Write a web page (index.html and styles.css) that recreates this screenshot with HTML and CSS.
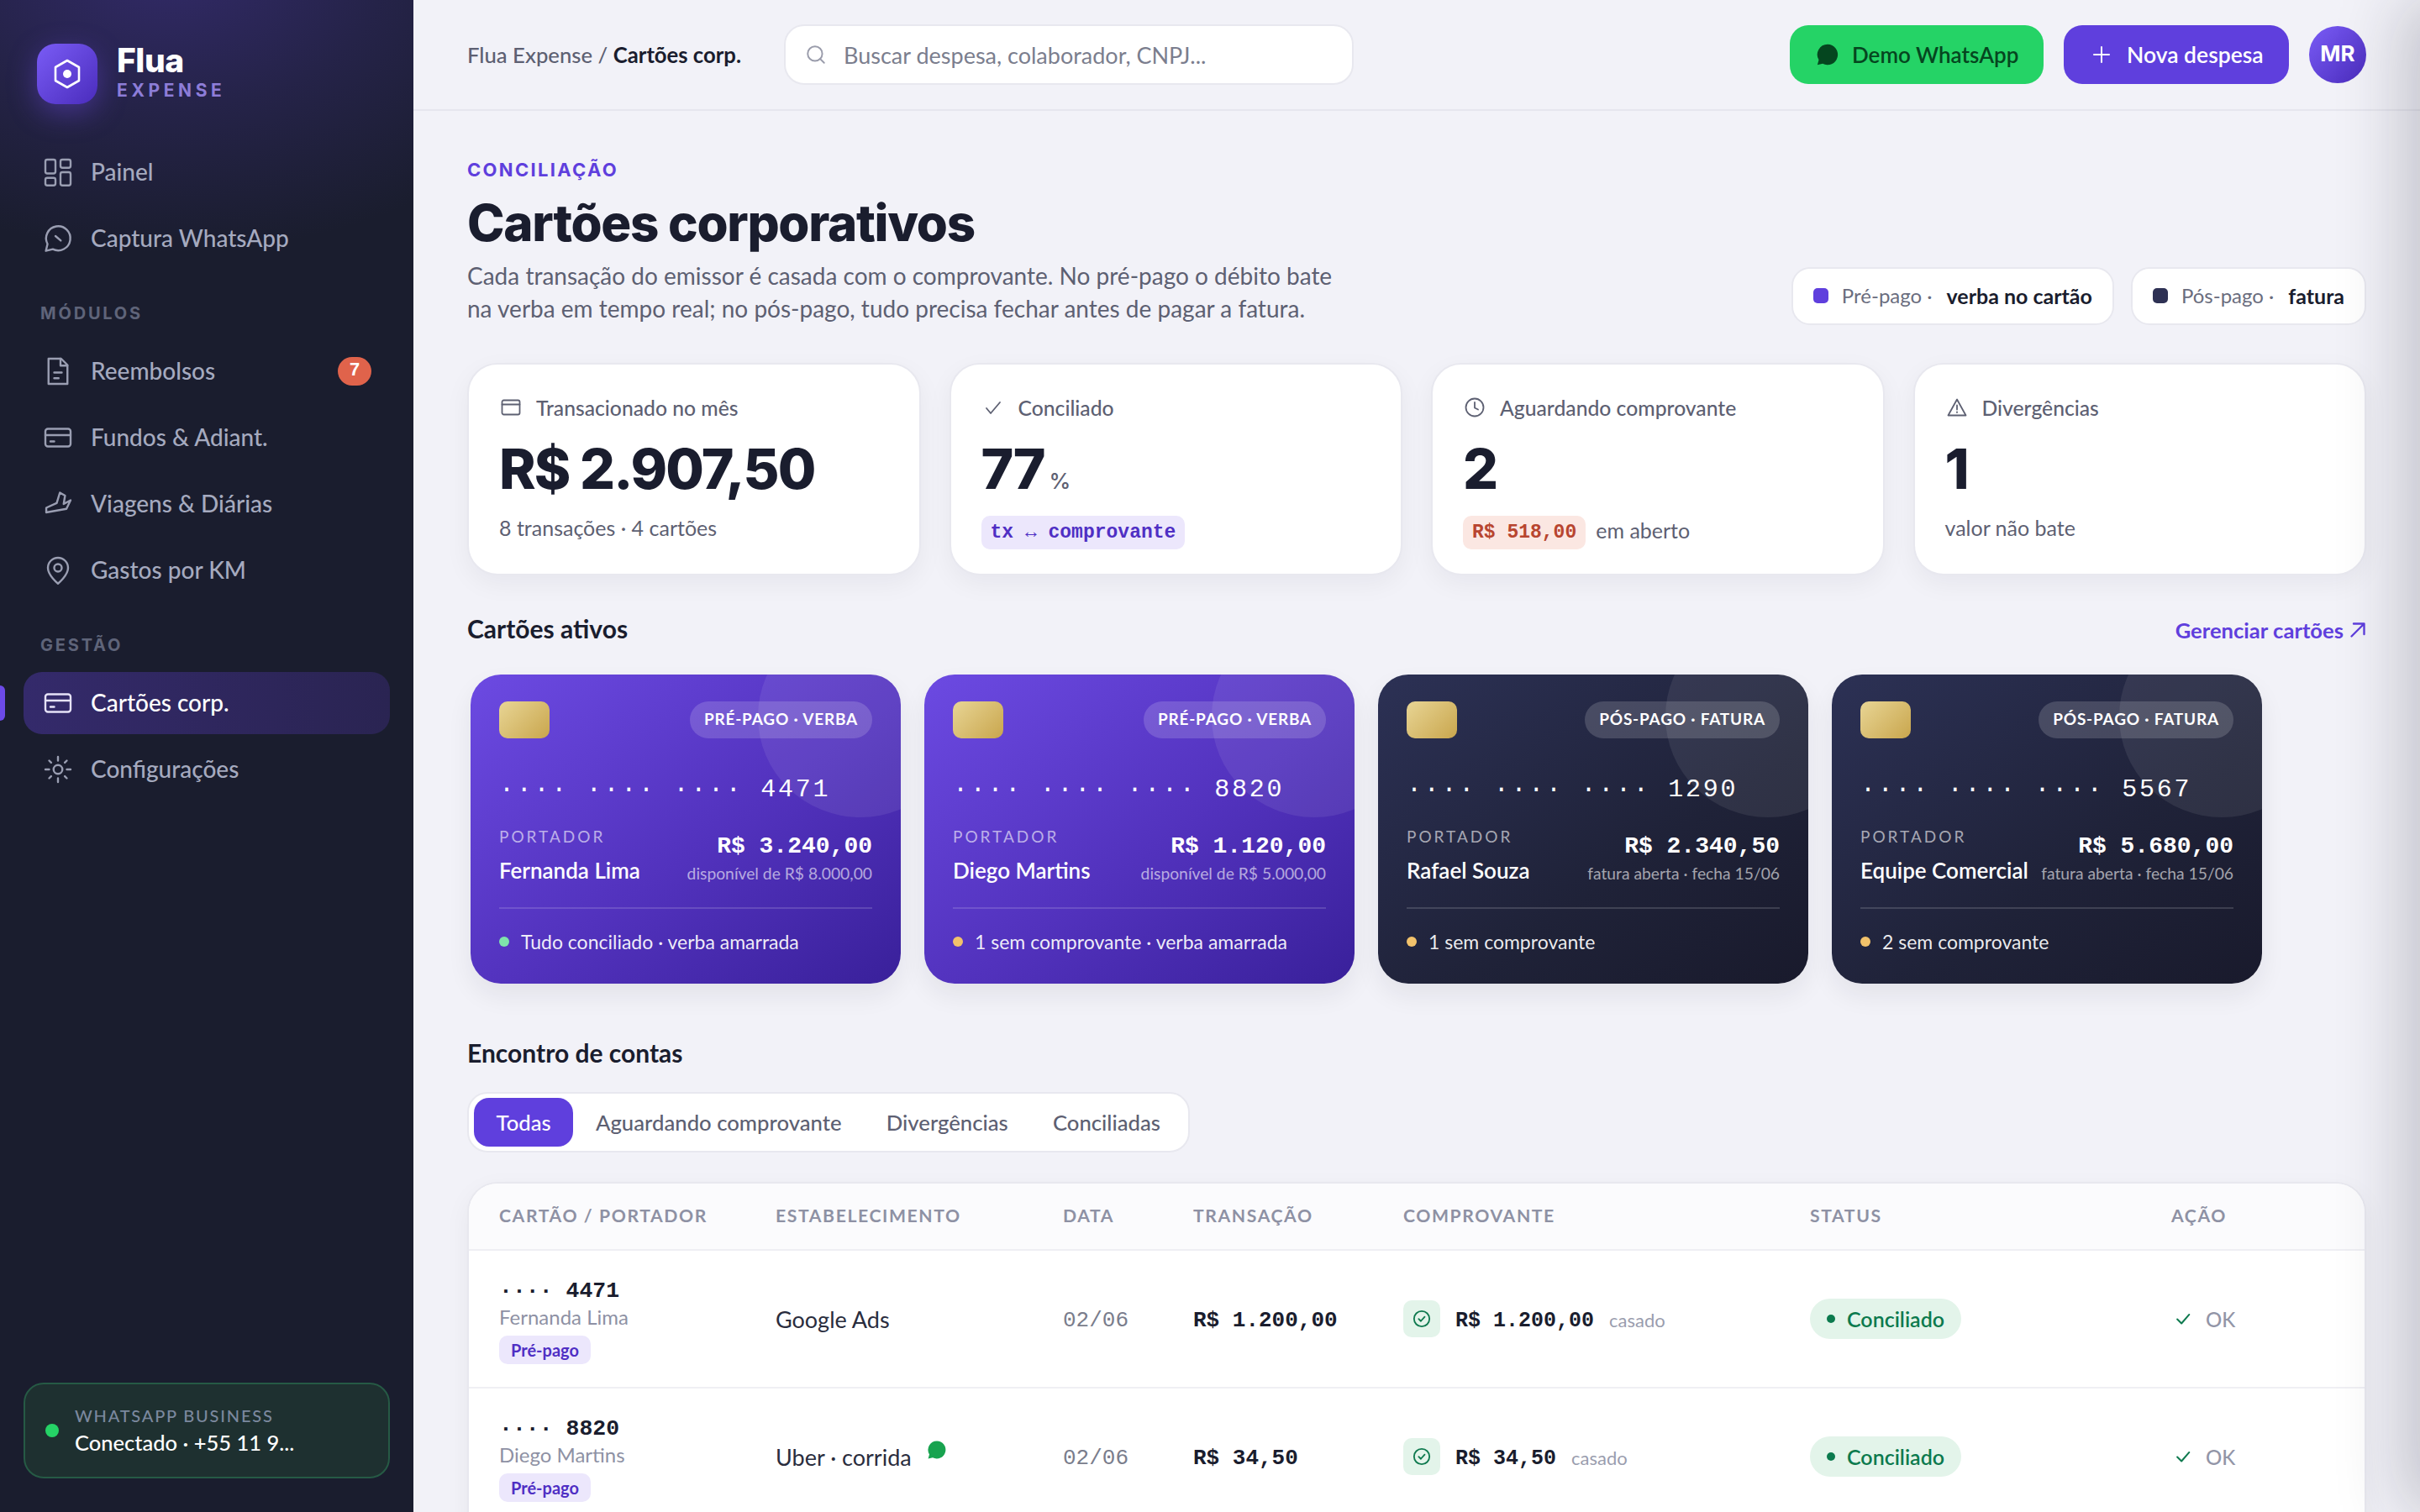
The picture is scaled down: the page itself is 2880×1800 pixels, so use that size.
FILE: index.html
```html
<!DOCTYPE html>
<html lang="pt-BR">
<head>
<meta charset="utf-8">
<title>Flua Expense</title>
<link rel="stylesheet" href="styles.css">
</head>
<body>
<svg class="defs" width="0" height="0" aria-hidden="true">
  <symbol id="i-card" viewBox="0 0 24 24"><rect x="2" y="5" width="20" height="14" rx="2"/><path d="M2 10h20M6 15h3"/></symbol>
  <symbol id="i-wa" viewBox="0 0 24 24"><path d="M12 1.5A10.5 10.5 0 0 0 3 17.4L1.6 22.6l5.4-1.3A10.5 10.5 0 1 0 12 1.5z"/></symbol>
  <symbol id="i-check" viewBox="0 0 24 24"><path d="M4.5 12.5 10 18 20 6.5"/></symbol>
  <symbol id="i-okc" viewBox="0 0 24 24"><circle cx="12" cy="12" r="10"/><path d="m8 12.2 2.8 2.8 5-5.6"/></symbol>
</svg>

<div class="app">
  <aside class="sidebar">
    <div class="brand">
      <div class="logo">
        <svg viewBox="0 0 32 36"><path d="M16 2 30 10v16l-14 8-14-8V10z"/><circle cx="16" cy="18" r="5"/></svg>
      </div>
      <div class="brand-text">
        <div class="brand-name">Flua</div>
        <div class="brand-sub">EXPENSE</div>
      </div>
    </div>
    <nav class="nav">
      <a class="nav-item"><svg class="nav-ico" viewBox="0 0 24 24"><rect x="2" y="2" width="8" height="11" rx="1.5"/><rect x="14" y="2" width="8" height="6.5" rx="1.5"/><rect x="14" y="12" width="8" height="10.5" rx="1.5"/><rect x="2" y="16.5" width="8" height="6" rx="1.5"/></svg><span>Painel</span></a>
      <a class="nav-item"><svg class="nav-ico" viewBox="0 0 24 24"><path d="M7.9 20.4A9.6 9.6 0 1 0 3.7 16.3L2.4 21.8z"/><path d="m10 10 4.2 3.6"/></svg><span>Captura WhatsApp</span></a>
      <div class="nav-label">MÓDULOS</div>
      <a class="nav-item"><svg class="nav-ico" viewBox="0 0 24 24"><path d="M14.5 2H4.5v20h15V7z"/><path d="M14 2v5.5h5.5M9 13h6M9 17.5h3.5"/></svg><span>Reembolsos</span><b class="badge">7</b></a>
      <a class="nav-item"><svg class="nav-ico"><use href="#i-card"/></svg><span>Fundos &amp; Adiant.</span></a>
      <a class="nav-item"><svg class="nav-ico" viewBox="0 0 24 24"><path d="M2.7 15 11 11.3 13.5 3l4.1 2.3-1.1 6.7L22 9l-3.3 6.8-16 2.9z"/></svg><span>Viagens &amp; Diárias</span></a>
      <a class="nav-item"><svg class="nav-ico" viewBox="0 0 24 24"><path d="M20 10c0 6-8 12.5-8 12.5S4 16 4 10a8 8 0 0 1 16 0z"/><circle cx="12" cy="10" r="3"/></svg><span>Gastos por KM</span></a>
      <div class="nav-label">GESTÃO</div>
      <a class="nav-item is-active"><i class="nav-mark"></i><svg class="nav-ico"><use href="#i-card"/></svg><span>Cartões corp.</span></a>
      <a class="nav-item"><svg class="nav-ico" viewBox="0 0 24 24"><circle cx="12" cy="12" r="3.5"/><path d="M12 2v3M12 19v3M2 12h3M19 12h3M5 5l1.6 1.6M17.4 17.4 19 19M5 19l1.6-1.6M17.4 6.6 19 5"/></svg><span>Configurações</span></a>
    </nav>
    <div class="wa-status">
      <i class="wa-dot"></i>
      <div class="wa-text">
        <div class="wa-title">WHATSAPP BUSINESS</div>
        <div class="wa-line">Conectado · +55 11 9...</div>
      </div>
    </div>
  </aside>

  <main class="main">
    <header class="topbar">
      <div class="crumb">Flua Expense / <b>Cartões corp.</b></div>
      <div class="search">
        <svg class="search-ico" viewBox="0 0 24 24"><circle cx="11" cy="11" r="8"/><path d="m21 21-4.3-4.3"/></svg>
        <span>Buscar despesa, colaborador, CNPJ...</span>
      </div>
      <div class="top-actions">
        <button class="btn btn-wa"><svg class="btn-ico-wa"><use href="#i-wa"/></svg>Demo WhatsApp</button>
        <button class="btn btn-new"><svg class="btn-ico-plus" viewBox="0 0 24 24"><path d="M12 3v18M3 12h18"/></svg>Nova despesa</button>
        <div class="avatar">MR</div>
      </div>
    </header>

    <div class="content">
      <section class="page-head">
        <div>
          <div class="eyebrow">CONCILIAÇÃO</div>
          <h1>Cartões corporativos</h1>
          <p class="desc">Cada transação do emissor é casada com o comprovante. No pré-pago o débito bate<br>na verba em tempo real; no pós-pago, tudo precisa fechar antes de pagar a fatura.</p>
        </div>
        <div class="legend">
          <div class="legend-chip"><i class="sq sq-pre"></i><span>Pré-pago ·</span><b>verba no cartão</b></div>
          <div class="legend-chip"><i class="sq sq-pos"></i><span>Pós-pago ·</span><b>fatura</b></div>
        </div>
      </section>

      <section class="kpis">
        <div class="kpi">
          <div class="kpi-label"><svg class="kpi-ico" viewBox="0 0 24 24"><rect x="1.5" y="3.5" width="21" height="17" rx="2"/><path d="M1.5 8.5h21"/></svg>Transacionado no mês</div>
          <div class="kpi-value">R$ 2.907,50</div>
          <div class="kpi-sub">8 transações · 4 cartões</div>
        </div>
        <div class="kpi">
          <div class="kpi-label"><svg class="kpi-ico" viewBox="0 0 24 24"><path d="m4 13 5 6L20 6"/></svg>Conciliado</div>
          <div class="kpi-value">77<small>%</small></div>
          <div class="kpi-sub"><code class="tag tag-purple">tx ↔ comprovante</code></div>
        </div>
        <div class="kpi">
          <div class="kpi-label"><svg class="kpi-ico" viewBox="0 0 24 24"><circle cx="12" cy="12" r="10.5"/><path d="M12 6v6.5l4 2"/></svg>Aguardando comprovante</div>
          <div class="kpi-value">2</div>
          <div class="kpi-sub"><code class="tag tag-red">R$ 518,00</code><span>em aberto</span></div>
        </div>
        <div class="kpi">
          <div class="kpi-label"><svg class="kpi-ico" viewBox="0 0 24 24"><path d="M12 2.5 1.5 21.5h21zM12 9.5v5M12 17.5v.5"/></svg>Divergências</div>
          <div class="kpi-value">1</div>
          <div class="kpi-sub">valor não bate</div>
        </div>
      </section>

      <div class="section-row">
        <h2>Cartões ativos</h2>
        <a class="link">Gerenciar cartões<svg viewBox="0 0 24 24"><path d="M6 18 18 6M8 6h10v10"/></svg></a>
      </div>

      <section class="cards">
        <article class="card card-pre">
          <div class="card-top"><i class="chip"></i><span class="card-type">PRÉ-PAGO · VERBA</span></div>
          <div class="card-num">···· ···· ···· 4471</div>
          <div class="card-info">
            <div><div class="card-cap">PORTADOR</div><div class="card-name">Fernanda Lima</div></div>
            <div class="card-right"><div class="card-amt">R$ 3.240,00</div><div class="card-note">disponível de R$ 8.000,00</div></div>
          </div>
          <div class="card-foot"><i class="dot dot-green"></i>Tudo conciliado · verba amarrada</div>
        </article>
        <article class="card card-pre">
          <div class="card-top"><i class="chip"></i><span class="card-type">PRÉ-PAGO · VERBA</span></div>
          <div class="card-num">···· ···· ···· 8820</div>
          <div class="card-info">
            <div><div class="card-cap">PORTADOR</div><div class="card-name">Diego Martins</div></div>
            <div class="card-right"><div class="card-amt">R$ 1.120,00</div><div class="card-note">disponível de R$ 5.000,00</div></div>
          </div>
          <div class="card-foot"><i class="dot dot-amber"></i>1 sem comprovante · verba amarrada</div>
        </article>
        <article class="card card-pos">
          <div class="card-top"><i class="chip"></i><span class="card-type">PÓS-PAGO · FATURA</span></div>
          <div class="card-num">···· ···· ···· 1290</div>
          <div class="card-info">
            <div><div class="card-cap">PORTADOR</div><div class="card-name">Rafael Souza</div></div>
            <div class="card-right"><div class="card-amt">R$ 2.340,50</div><div class="card-note">fatura aberta · fecha 15/06</div></div>
          </div>
          <div class="card-foot"><i class="dot dot-amber"></i>1 sem comprovante</div>
        </article>
        <article class="card card-pos">
          <div class="card-top"><i class="chip"></i><span class="card-type">PÓS-PAGO · FATURA</span></div>
          <div class="card-num">···· ···· ···· 5567</div>
          <div class="card-info">
            <div><div class="card-cap">PORTADOR</div><div class="card-name">Equipe Comercial</div></div>
            <div class="card-right"><div class="card-amt">R$ 5.680,00</div><div class="card-note">fatura aberta · fecha 15/06</div></div>
          </div>
          <div class="card-foot"><i class="dot dot-amber"></i>2 sem comprovante</div>
        </article>
      </section>

      <h2 class="h2-match">Encontro de contas</h2>
      <div class="tabs">
        <span class="tab is-on">Todas</span>
        <span class="tab">Aguardando comprovante</span>
        <span class="tab">Divergências</span>
        <span class="tab">Conciliadas</span>
      </div>

      <section class="table">
        <div class="row row-head">
          <div>CARTÃO / PORTADOR</div><div>ESTABELECIMENTO</div><div>DATA</div><div>TRANSAÇÃO</div><div>COMPROVANTE</div><div>STATUS</div><div>AÇÃO</div>
        </div>
        <div class="row">
          <div class="holder"><div class="holder-num">···· 4471</div><div class="holder-name">Fernanda Lima</div><span class="holder-tag">Pré-pago</span></div>
          <div class="merchant">Google Ads</div>
          <div class="date">02/06</div>
          <div class="amount">R$ 1.200,00</div>
          <div class="receipt"><span class="receipt-ico"><svg><use href="#i-okc"/></svg></span><span class="receipt-amt">R$ 1.200,00</span><span class="receipt-note">casado</span></div>
          <div><span class="status"><i></i>Conciliado</span></div>
          <div class="action"><svg><use href="#i-check"/></svg>OK</div>
        </div>
        <div class="row">
          <div class="holder"><div class="holder-num">···· 8820</div><div class="holder-name">Diego Martins</div><span class="holder-tag">Pré-pago</span></div>
          <div class="merchant">Uber · corrida<svg class="merchant-wa"><use href="#i-wa"/></svg></div>
          <div class="date">02/06</div>
          <div class="amount">R$ 34,50</div>
          <div class="receipt"><span class="receipt-ico"><svg><use href="#i-okc"/></svg></span><span class="receipt-amt">R$ 34,50</span><span class="receipt-note">casado</span></div>
          <div><span class="status"><i></i>Conciliado</span></div>
          <div class="action"><svg><use href="#i-check"/></svg>OK</div>
        </div>
      </section>
    </div>
  </main>
</div>
<div class="drawer-shadow"></div>
</body>
</html>
```
FILE: styles.css
```css
* { box-sizing: border-box; }
html, body { margin: 0; height: 1800px; overflow: hidden; }
body { background: #f2f2f8; color: #1a1d2e; font-family: "Lato", "Noto Sans", sans-serif; }
.defs { position: absolute; }
svg { display: block; fill: none; stroke: currentColor; stroke-linecap: round; stroke-linejoin: round; }
.app { display: flex; height: 1800px; }

/* sidebar */
.sidebar { width: 492px; flex: none; height: 1800px; padding: 52px 28px 40px; display: flex; flex-direction: column; color: #a5aabf;
  background: radial-gradient(ellipse 520px 340px at 200px -40px, #322a68 0%, rgba(50,42,104,.45) 50%, rgba(26,29,46,0) 100%), #1a1d2e; }
.brand { display: flex; align-items: center; gap: 23px; padding-left: 16px; height: 72px; }
.logo { width: 72px; height: 72px; border-radius: 22px; display: flex; align-items: center; justify-content: center;
  background: linear-gradient(135deg, #7a5cf6, #4a2cbc); box-shadow: 0 10px 34px rgba(108,74,224,.45); }
.logo svg { width: 32px; height: 36px; color: #fff; stroke-width: 2.6; }
.logo circle { fill: #fff; stroke: none; }
.brand-name { font: 800 39px/40px "Inter", sans-serif; color: #fff; letter-spacing: -.5px; margin-top: -4px; }
.brand-sub { font: 700 21px/24px "Inter", sans-serif; color: #8d7dd8; letter-spacing: .22em; margin-top: 4px; }
.nav { display: flex; flex-direction: column; gap: 5px; margin-top: 44px; }
.nav-item { position: relative; height: 74px; display: flex; align-items: center; gap: 21px; padding-left: 23px; border-radius: 22px; font-size: 28px; font-weight: 500; }
.nav-item span { margin-bottom: 3px; }
.nav-ico { width: 36px; height: 36px; stroke-width: 1.6; flex: none; color: #9a9eb2; }
.nav-label { height: 74px; padding: 35px 0 0 20px; font: 700 20px/24px "Inter", sans-serif; letter-spacing: .14em; color: #5f6479; }
.badge { margin-left: auto; margin-right: 22px; width: 40px; height: 34px; border-radius: 17px; background: #e0634b; color: #fff; font: 700 22px/34px "Liberation Mono", monospace; text-align: center; }
.is-active { background: linear-gradient(90deg, #342a6b, #2a2452); color: #fff; }
.is-active .nav-ico { color: #e6e2f8; }
.nav-mark { position: absolute; left: -28px; top: 16px; width: 6px; height: 42px; background: #6c4ae8; border-radius: 0 6px 6px 0; }
.wa-status { margin-top: auto; height: 114px; display: flex; align-items: center; gap: 19px; padding-left: 24px; border-radius: 24px; background: #1e3030; border: 2px solid #265a45; }
.wa-dot { width: 16px; height: 16px; border-radius: 50%; background: #25d366; flex: none; }
.wa-title { font-size: 20px; line-height: 26px; letter-spacing: .09em; color: #7b889e; font-weight: 500; }
.wa-line { font-size: 25.5px; line-height: 34px; color: #fff; font-weight: 500; margin-top: 2px; }

/* main */
.main { flex: 1; min-width: 0; display: flex; flex-direction: column; height: 1800px; overflow: hidden; }
.topbar { height: 132px; flex: none; display: flex; align-items: center; padding: 0 64px; border-bottom: 2px solid #e6e6ee; }
.crumb { font-size: 25.7px; color: #5d6072; font-weight: 500; }
.crumb b { color: #1a1d2e; font-weight: 700; }
.search { margin-left: 51px; width: 678px; height: 72px; display: flex; align-items: center; gap: 20px; padding-left: 23px; background: #fff; border: 2px solid #e8e8ef; border-radius: 24px; font-size: 27px; color: #7b7e8e; }
.search-ico { width: 26px; height: 26px; stroke-width: 1.8; color: #9a9cab; }
.top-actions { margin-left: auto; display: flex; align-items: center; gap: 24px; }
.btn { height: 70px; display: flex; align-items: center; border: 0; border-radius: 22px; font: 600 26.5px "Lato", sans-serif; }
.btn-wa { width: 302px; padding-left: 31px; gap: 15px; background: #25d366; color: #05461f; font-size: 26px; }
.btn-ico-wa { width: 28px; height: 28px; fill: #05461f; stroke: none; }
.btn-new { width: 268px; padding-left: 33px; gap: 18px; background: #5f3fdd; color: #fff; }
.btn-ico-plus { width: 24px; height: 24px; stroke-width: 2; color: #fff; }
.avatar { width: 68px; height: 68px; border-radius: 50%; display: flex; align-items: center; justify-content: center; color: #fff; font: 700 26px "Inter", sans-serif; background: linear-gradient(135deg, #7a5cf6, #4a2cbc); padding-bottom: 4px; }

.content { padding: 57px 64px 0; }
.page-head { display: flex; justify-content: space-between; align-items: flex-end; }
.eyebrow { font: 700 22px/26px "Inter", sans-serif; letter-spacing: .105em; color: #5f3fdd; }
h1 { margin: 14px 0 0; font: 800 60px/72px "Inter", sans-serif; letter-spacing: -1.3px; color: #1a1d2e; }
.desc { margin: 8px 0 0; font-size: 28px; line-height: 39px; color: #5d6072; }
.legend { display: flex; gap: 20px; }
.legend-chip { height: 69px; display: flex; align-items: center; padding: 0 24px 2px; background: #fff; border: 2px solid #e8e8ef; border-radius: 22px; font-size: 24px; color: #6a6d7e; }
.legend-chip b { color: #1a1d2e; font-size: 25px; font-weight: 700; margin-left: 17px; }
.sq { width: 18px; height: 18px; border-radius: 5px; margin-right: 16px; }
.sq-pre { background: #5f3fdd; }
.sq-pos { background: #2e3154; }

.kpis { display: grid; grid-template-columns: repeat(4, 1fr); gap: 34px; margin-top: 45px; }
.kpi { height: 253px; padding: 34px 36px 0; background: #fff; border: 2px solid #e8e8ef; border-radius: 36px; box-shadow: 0 10px 30px rgba(26,29,46,.05); }
.kpi-label { display: flex; align-items: center; gap: 18px; height: 34px; font-size: 24.7px; font-weight: 500; color: #5d6072; }
.kpi-ico { width: 24px; height: 24px; stroke-width: 1.8; flex: none; margin-left: 2px; }
.kpi-value { margin-top: 20px; font: 800 66px/72px "Inter", sans-serif; letter-spacing: -1.9px; color: #1a1d2e; }
.kpi-value small { font-size: 26px; line-height: 1; font-weight: 500; color: #5d6072; letter-spacing: 0; margin-left: 6px; }
.kpi-sub { margin-top: 14px; display: flex; align-items: center; gap: 12px; min-height: 40px; font-size: 25px; color: #5d6072; }
.tag { display: inline-block; height: 40px; padding: 0 11px; border-radius: 10px; margin-top: 6px; font: 700 23px/40px "Liberation Mono", monospace; }
.tag-purple { background: #ece7fc; color: #4f2fc4; }
.tag-red { background: #fbe7e2; color: #b8452f; }

.section-row { display: flex; justify-content: space-between; align-items: center; margin-top: 43px; }
h2 { margin: 0; font-size: 30px; line-height: 40px; font-weight: 700; color: #1a1d2e; }
.link { display: flex; align-items: center; font-size: 25.6px; font-weight: 700; color: #5f3fdd; padding-top: 4px; }
.link svg { width: 30px; height: 30px; stroke-width: 1.9; margin: 0 -5px 0 2px; }

.cards { display: flex; gap: 28px; padding: 0 4px; margin-top: 35px; }
.card { position: relative; overflow: hidden; width: 512px; height: 368px; flex: none; padding: 32px 34px 0; border-radius: 36px; color: #fff; box-shadow: 0 14px 30px rgba(26,29,46,.07); }
.card::after { content: ""; position: absolute; top: -70px; right: -74px; width: 244px; height: 240px; border-radius: 50%; background: rgba(255,255,255,.08); }
.card-pre { background: linear-gradient(145deg, #6c4ae2 0%, #5232bd 55%, #39209a 100%); }
.card-pos { background: linear-gradient(145deg, #2c3155 0%, #1f2238 60%, #191a2c 100%); }
.card-top { display: flex; justify-content: space-between; }
.chip { width: 60px; height: 44px; border-radius: 10px; background: linear-gradient(135deg, #e8d595, #c9a64d); }
.card-type { height: 44px; padding: 0 17px; border-radius: 22px; background: rgba(255,255,255,.16); font: 700 19px/42px "Lato", sans-serif; letter-spacing: .8px; }
.card-num { margin-top: 43px; font: 400 30px/36px "Liberation Mono", monospace; letter-spacing: 2.75px; }
.card-info { display: flex; justify-content: space-between; margin-top: 25px; height: 97px; }
.card-cap { font-size: 19px; line-height: 24px; letter-spacing: 3px; color: rgba(255,255,255,.6); margin-top: 1px; }
.card-name { font-size: 26px; line-height: 36px; font-weight: 600; margin-top: 10px; }
.card-right { text-align: right; }
.card-amt { font: 700 28px/36px "Liberation Mono", monospace; margin-top: 7px; }
.card-note { font-size: 19.3px; line-height: 28px; color: rgba(255,255,255,.6); margin-top: 0; }
.card-foot { display: flex; align-items: center; gap: 14px; border-top: 2px solid rgba(255,255,255,.15); height: 82px; padding-bottom: 3px; font-size: 23px; color: rgba(255,255,255,.92); }
.dot { width: 12px; height: 12px; border-radius: 50%; }
.dot-green { background: #7fe3ab; }
.dot-amber { background: #f2c26b; }

.h2-match { margin-top: 62px; }
.tabs { display: inline-flex; margin-top: 27px; padding: 5px 6px; background: #fff; border: 2px solid #e8e8ef; border-radius: 24px; height: 72px; }
.tab { height: 58px; padding: 0 26.6px; border-radius: 18px; font-size: 25.7px; line-height: 58px; font-weight: 500; color: #5d6072; }
.tab.is-on { background: #5f3fdd; color: #fff; }

.table { margin-top: 35px; background: #fff; border: 2px solid #e8e8ef; border-bottom: 0; border-radius: 36px 36px 0 0; overflow: hidden; box-shadow: 0 10px 30px rgba(26,29,46,.05); }
.row { display: grid; grid-template-columns: 329px 342px 155px 250px 484px 430px 1fr; align-items: center; padding-left: 36px; height: 164px; border-top: 2px solid #efeff4; }
.row-head { height: 80px; padding-bottom: 2px; border-top: 0; border-bottom: 2px solid #e6e6ee; margin-bottom: -2px; background: #fbfbfd; font: 700 21.2px "Lato", sans-serif; letter-spacing: .075em; color: #8e91a4; }
.holder { margin-top: 2px; }
.holder-num { font: 700 26.5px/30px "Liberation Mono", monospace; color: #1a1d2e; padding-top: 4px; }
.holder-name { font-size: 24px; line-height: 32px; color: #8e91a4; }
.holder-tag { display: inline-block; margin-top: 6px; height: 34px; padding: 0 14px; border-radius: 10px; background: #ece7fc; color: #4f2fc4; font-size: 20px; line-height: 34px; font-weight: 700; }
.merchant { display: flex; align-items: center; gap: 18px; font-size: 27px; color: #2a2d3e; }
.merchant-wa { width: 24px; height: 24px; fill: #18a34f; stroke: none; margin-top: -16px; }
.date { font: 400 26px "Liberation Mono", monospace; color: #7a7d8c; margin-top: 3px; }
.amount { font: 700 26px "Liberation Mono", monospace; color: #1a1d2e; margin-top: 3px; }
.receipt { display: flex; align-items: center; }
.receipt-ico { width: 44px; height: 44px; border-radius: 10px; background: #e3f4ea; color: #0f7a4f; display: flex; align-items: center; justify-content: center; margin-right: 18px; }
.receipt-ico svg { width: 22px; height: 22px; stroke-width: 2; }
.receipt-amt { font: 700 25px "Liberation Mono", monospace; color: #1a1d2e; margin-right: 18px; margin-top: 4px; }
.receipt-note { font-size: 22px; color: #9a9dae; margin-top: 2px; }
.status { display: inline-flex; align-items: center; gap: 14px; height: 48px; padding: 0 20px; border-radius: 24px; background: #e3f4ea; color: #0c7a4e; font-size: 25px; font-weight: 600; }
.status i { width: 10px; height: 10px; border-radius: 50%; background: #0c7a4e; }
.action { display: flex; align-items: center; gap: 16px; font-size: 24px; font-weight: 500; color: #9295a7; }
.action svg { width: 22px; height: 22px; stroke-width: 2.2; color: #0f7a4f; margin-left: 3px; }

.drawer-shadow { position: fixed; top: 0; bottom: 0; left: 100%; width: 200px; box-shadow: -20px 0 80px rgba(26,29,46,.22); pointer-events: none; }
```
